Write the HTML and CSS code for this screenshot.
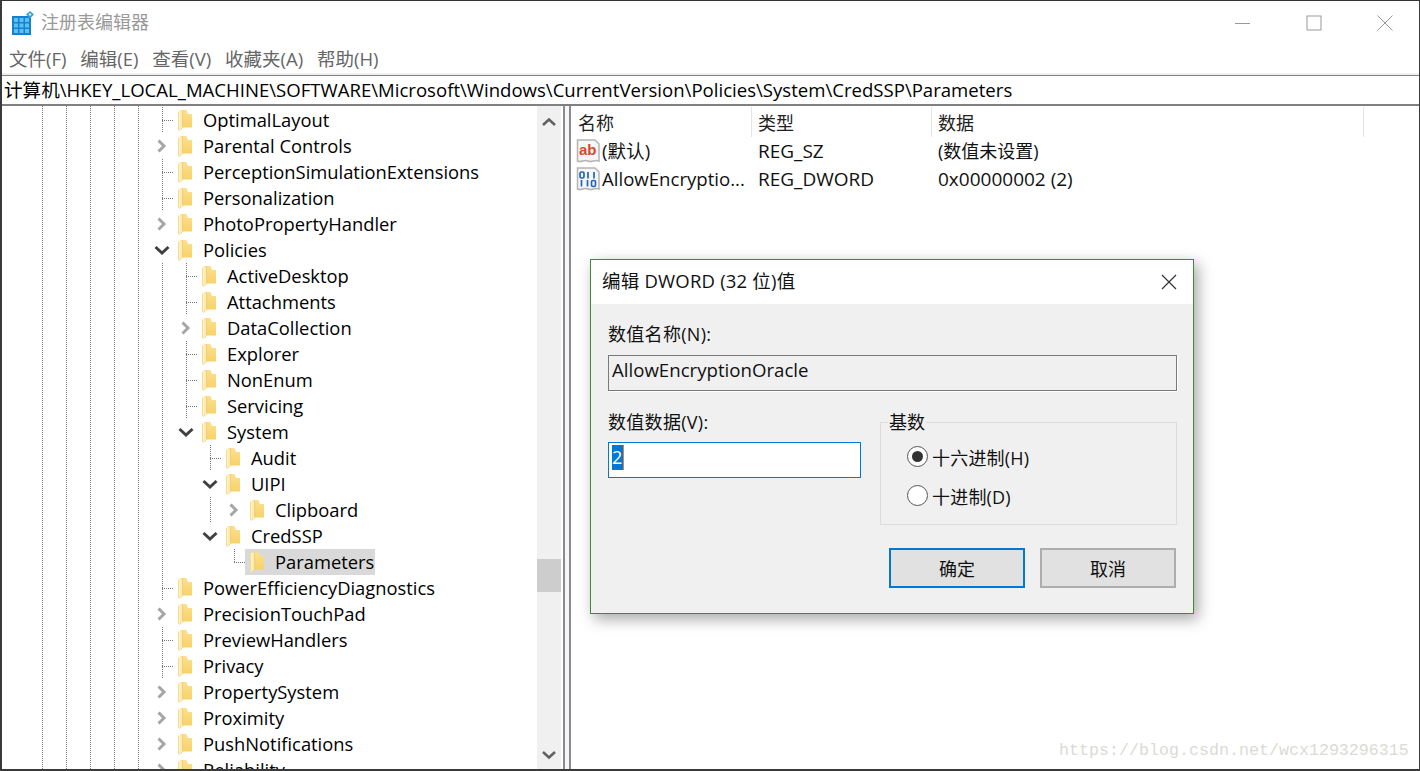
FILE: index.html
```html
<!DOCTYPE html>
<html lang="zh-CN">
<head>
<meta charset="utf-8">
<title>注册表编辑器</title>
<link rel="stylesheet" href="styles.css">
</head>
<body>
<svg class="sprite" aria-hidden="true">
  <defs>
    <linearGradient id="door" x1="0" x2="1" y1="0" y2="0"><stop offset="0" stop-color="#fff4cb"/><stop offset="1" stop-color="#fde7a2"/></linearGradient>
    <linearGradient id="back" x1="0" x2="0" y1="0" y2="1"><stop offset="0" stop-color="#fbe08f"/><stop offset="1" stop-color="#f8d269"/></linearGradient>
  </defs>
  <symbol id="folder" viewBox="0 0 14 21">
    <path d="M2 0H8.500L10 4H14V17.500H2Z" fill="url(#back)"/>
    <path d="M0 1.600L4.600 0.200V17.600L1.400 20.600L0 20.200Z" fill="url(#door)"/>
    <path d="M0.300 1.800V20M4.600 0.200V17.600L1.400 20.600" fill="none" stroke="#e8c874" stroke-width=".7"/>
  </symbol>
  <symbol id="right" viewBox="0 0 24 26">
    <path d="M8.500 7.500L14 13L8.500 18.500" fill="none" stroke="#a6a6a6" stroke-width="3"/>
  </symbol>
  <symbol id="down" viewBox="0 0 24 26">
    <path d="M5.500 10L12 16L18.500 10" fill="none" stroke="#404040" stroke-width="3"/>
  </symbol>
</svg>
<div class="window">
  <header class="titlebar">
    <svg class="appicon" viewBox="0 0 22 24" width="22" height="24">
      <rect x="0" y="5" width="19" height="19" fill="#1582cf"/>
      <path d="M2 7h4v4H2zM7.500 7h4v4h-4zM13 7h4v4h-4zM2 12.500h4v4H2zM7.500 12.500h4v4h-4zM13 12.500h4v4h-4zM2 18h4v4H2zM7.500 18h4v4h-4zM13 18h4v4h-4z" fill="#5cc0f0"/>
      <path d="M18 0l4 3.500-4 4-4-4z" fill="#3aa0dc"/>
      <path d="M18 2l1.500 1.500L18 5l-1.500-1.500z" fill="#d8f0fb"/>
    </svg>
    <span class="apptitle">注册表编辑器</span>
    <div class="winbtns">
      <svg viewBox="0 0 16 16" width="16" height="16"><path d="M0 8.500H15" stroke="#999" fill="none"/></svg>
      <svg viewBox="0 0 16 16" width="16" height="16"><rect x="1" y="1" width="14" height="14" stroke="#999" fill="none"/></svg>
      <svg viewBox="0 0 16 16" width="16" height="16"><path d="M0.500 0.500L15.500 15.500M15.500 0.500L0.500 15.500" stroke="#999" fill="none"/></svg>
    </div>
  </header>
  <nav class="menubar">
    <span class="menu">文件(F)</span>
    <span class="menu">编辑(E)</span>
    <span class="menu">查看(V)</span>
    <span class="menu">收藏夹(A)</span>
    <span class="menu">帮助(H)</span>
  </nav>
  <div class="address">计算机\HKEY_LOCAL_MACHINE\SOFTWARE\Microsoft\Windows\CurrentVersion\Policies\System\CredSSP\Parameters</div>
  <main class="panes">
    <section class="treepane">
      <div class="tree">
        <div class="row"><span class="tw leaf"></span><span class="item"><svg class="fld"><use href="#folder"/></svg><span class="lbl">OptimalLayout</span></span></div>
        <div class="row"><span class="tw"><svg class="chev"><use href="#right"/></svg></span><span class="item"><svg class="fld"><use href="#folder"/></svg><span class="lbl">Parental Controls</span></span></div>
        <div class="row"><span class="tw leaf"></span><span class="item"><svg class="fld"><use href="#folder"/></svg><span class="lbl">PerceptionSimulationExtensions</span></span></div>
        <div class="row"><span class="tw leaf"></span><span class="item"><svg class="fld"><use href="#folder"/></svg><span class="lbl">Personalization</span></span></div>
        <div class="row"><span class="tw"><svg class="chev"><use href="#right"/></svg></span><span class="item"><svg class="fld"><use href="#folder"/></svg><span class="lbl">PhotoPropertyHandler</span></span></div>
        <div class="row"><span class="tw"><svg class="chev"><use href="#down"/></svg></span><span class="item"><svg class="fld"><use href="#folder"/></svg><span class="lbl">Policies</span></span></div>
        <div class="row"><span class="ind v"></span><span class="tw leaf"></span><span class="item"><svg class="fld"><use href="#folder"/></svg><span class="lbl">ActiveDesktop</span></span></div>
        <div class="row"><span class="ind v"></span><span class="tw leaf"></span><span class="item"><svg class="fld"><use href="#folder"/></svg><span class="lbl">Attachments</span></span></div>
        <div class="row"><span class="ind v"></span><span class="tw"><svg class="chev"><use href="#right"/></svg></span><span class="item"><svg class="fld"><use href="#folder"/></svg><span class="lbl">DataCollection</span></span></div>
        <div class="row"><span class="ind v"></span><span class="tw leaf"></span><span class="item"><svg class="fld"><use href="#folder"/></svg><span class="lbl">Explorer</span></span></div>
        <div class="row"><span class="ind v"></span><span class="tw leaf"></span><span class="item"><svg class="fld"><use href="#folder"/></svg><span class="lbl">NonEnum</span></span></div>
        <div class="row"><span class="ind v"></span><span class="tw leaf"></span><span class="item"><svg class="fld"><use href="#folder"/></svg><span class="lbl">Servicing</span></span></div>
        <div class="row"><span class="ind v"></span><span class="tw"><svg class="chev"><use href="#down"/></svg></span><span class="item"><svg class="fld"><use href="#folder"/></svg><span class="lbl">System</span></span></div>
        <div class="row"><span class="ind v"></span><span class="ind"></span><span class="tw leaf"></span><span class="item"><svg class="fld"><use href="#folder"/></svg><span class="lbl">Audit</span></span></div>
        <div class="row"><span class="ind v"></span><span class="ind"></span><span class="tw"><svg class="chev"><use href="#down"/></svg></span><span class="item"><svg class="fld"><use href="#folder"/></svg><span class="lbl">UIPI</span></span></div>
        <div class="row"><span class="ind v"></span><span class="ind"></span><span class="ind v"></span><span class="tw"><svg class="chev"><use href="#right"/></svg></span><span class="item"><svg class="fld"><use href="#folder"/></svg><span class="lbl">Clipboard</span></span></div>
        <div class="row"><span class="ind v"></span><span class="ind"></span><span class="tw"><svg class="chev"><use href="#down"/></svg></span><span class="item"><svg class="fld"><use href="#folder"/></svg><span class="lbl">CredSSP</span></span></div>
        <div class="row"><span class="ind v"></span><span class="ind"></span><span class="ind"></span><span class="tw last"></span><span class="item selected"><svg class="fld"><use href="#folder"/></svg><span class="lbl">Parameters</span></span></div>
        <div class="row"><span class="tw leaf"></span><span class="item"><svg class="fld"><use href="#folder"/></svg><span class="lbl">PowerEfficiencyDiagnostics</span></span></div>
        <div class="row"><span class="tw"><svg class="chev"><use href="#right"/></svg></span><span class="item"><svg class="fld"><use href="#folder"/></svg><span class="lbl">PrecisionTouchPad</span></span></div>
        <div class="row"><span class="tw leaf"></span><span class="item"><svg class="fld"><use href="#folder"/></svg><span class="lbl">PreviewHandlers</span></span></div>
        <div class="row"><span class="tw leaf"></span><span class="item"><svg class="fld"><use href="#folder"/></svg><span class="lbl">Privacy</span></span></div>
        <div class="row"><span class="tw"><svg class="chev"><use href="#right"/></svg></span><span class="item"><svg class="fld"><use href="#folder"/></svg><span class="lbl">PropertySystem</span></span></div>
        <div class="row"><span class="tw"><svg class="chev"><use href="#right"/></svg></span><span class="item"><svg class="fld"><use href="#folder"/></svg><span class="lbl">Proximity</span></span></div>
        <div class="row"><span class="tw"><svg class="chev"><use href="#right"/></svg></span><span class="item"><svg class="fld"><use href="#folder"/></svg><span class="lbl">PushNotifications</span></span></div>
        <div class="row"><span class="tw"><svg class="chev"><use href="#right"/></svg></span><span class="item"><svg class="fld"><use href="#folder"/></svg><span class="lbl">Reliability</span></span></div>
      </div>
      <div class="scrollbar">
        <svg class="sarrow" viewBox="0 0 14 10" width="14" height="10"><path d="M1 8L7 2.500L13 8" fill="none" stroke="#606060" stroke-width="2.500"/></svg>
        <div class="thumb"></div>
        <svg class="sarrow" viewBox="0 0 14 10" width="14" height="10"><path d="M1 2L7 7.500L13 2" fill="none" stroke="#606060" stroke-width="2.500"/></svg>
      </div>
    </section>
    <div class="splitter"></div>
    <section class="listpane">
      <div class="lhead">
        <span class="hcell h1">名称</span>
        <span class="hcell h2">类型</span>
        <span class="hcell h3">数据</span>
      </div>
      <div class="lrow">
        <span class="cell c1">
          <svg class="vicon" viewBox="0 0 24 24" width="24" height="24">
            <path d="M1.500 1H19L23 5V22C19 20 16 24 12 22C8 20 5 24 1.500 22Z" fill="#f6f6f6" stroke="#b4b4b4" stroke-width="1.500"/>
            <text x="3" y="15.500" class="ab">ab</text>
          </svg>
          <span class="vname">(默认)</span>
        </span>
        <span class="cell c2 wide">REG_SZ</span>
        <span class="cell c3">(数值未设置)</span>
      </div>
      <div class="lrow">
        <span class="cell c1">
          <svg class="vicon" viewBox="0 0 24 24" width="24" height="24">
            <path d="M1.500 1H19L23 5V22C19 20 16 24 12 22C8 20 5 24 1.500 22Z" fill="#f6f6f6" stroke="#b4b4b4" stroke-width="1.500"/>
            <g fill="none" stroke="#2464c0" stroke-width="1.700">
              <rect x="4" y="5" width="4" height="6" rx="1.500"/>
              <path d="M12 5V11.500M18 5V11.500"/>
              <path d="M5.500 13V19.500M11.500 13V19.500"/>
              <rect x="15.500" y="13.500" width="4" height="6" rx="1.500"/>
            </g>
          </svg>
          <span class="vname">AllowEncryptio...</span>
        </span>
        <span class="cell c2 wide">REG_DWORD</span>
        <span class="cell c3 wide">0x00000002 (2)</span>
      </div>
    </section>
  </main>
  <div class="watermark">https://blog.csdn.net/wcx1293296315</div>
  <div class="dialog">
    <div class="dtitle">
      <span class="dcap">编辑 DWORD (32 位)值</span>
      <svg viewBox="0 0 16 16" width="16" height="16"><path d="M1 1L15 15M15 1L1 15" stroke="#333" stroke-width="1.200" fill="none"/></svg>
    </div>
    <div class="dbody">
      <div class="flabel">数值名称(N):</div>
      <div class="namebox">AllowEncryptionOracle</div>
      <div class="dmid">
        <div class="dataside">
          <div class="flabel">数值数据(V):</div>
          <div class="databox"><span class="sel">2</span></div>
        </div>
        <fieldset class="base">
          <legend>基数</legend>
          <div class="radio first"><span class="rmark on"></span>十六进制(H)</div>
          <div class="radio"><span class="rmark"></span>十进制(D)</div>
        </fieldset>
      </div>
      <div class="dbtns">
        <button class="btn primary">确定</button>
        <button class="btn">取消</button>
      </div>
    </div>
  </div>
</div>
</body>
</html>
```
FILE: styles.css
```css
* { box-sizing: border-box; }
html, body { margin: 0; padding: 0; height: 100%; overflow: hidden; }
body {
  background: #fff;
  font-family: "Open Sans", "Noto Sans CJK SC", sans-serif;
  font-size: 18px;
  color: #000;
}
.sprite { position: absolute; width: 0; height: 0; }
.window {
  position: relative;
  width: 1420px;
  height: 771px;
  border-top: 1px solid #333;
  border-left: 2px solid #3a3a3a;
  border-right: 1px solid #3a3a3a;
  border-bottom: 2px solid #3a3a3a;
  display: flex;
  flex-direction: column;
  overflow: hidden;
  background: #fff;
}

/* title + menu */
.titlebar { height: 42px; display: flex; align-items: center; padding-left: 10px; flex: none; }
.appicon { margin-top: 1px; }
.apptitle { margin-left: 7px; color: #999; line-height: 24px; }
.winbtns { margin-left: auto; display: flex; gap: 55px; padding-right: 26px; margin-top: 2px; }
.menubar { height: 32px; display: flex; align-items: center; padding-left: 7px; gap: 13.800px; color: #666; flex: none; font-size: 18.500px; }
.menu { line-height: 24px; }

/* address */
.address {
  flex: none;
  height: 31px;
  border-top: 1px solid #808080;
  border-bottom: 2px solid #808080;
  box-shadow: 0 -2px 0 #f0f0f0;
  padding-left: 2px;
  line-height: 28px;
  white-space: nowrap;
  font-size: 18.580px;
}

/* panes */
.panes { flex: 1; display: flex; min-height: 0; }
.treepane { width: 559px; display: flex; flex: none; }
.tree {
  width: 535px;
  flex: none;
  padding-top: 1px;
  overflow: hidden;
  font-size: 18.350px;
  background-image:
    repeating-linear-gradient(#777 0 1px, transparent 1px 2px),
    repeating-linear-gradient(#777 0 1px, transparent 1px 2px),
    repeating-linear-gradient(#777 0 1px, transparent 1px 2px),
    repeating-linear-gradient(#777 0 1px, transparent 1px 2px),
    repeating-linear-gradient(#777 0 1px, transparent 1px 2px);
  background-size: 1px 100%;
  background-repeat: no-repeat;
  background-position: 40px 0, 64px 0, 88px 0, 112px 0, 136px 0;
}
.row { height: 26px; display: flex; padding-left: 148px; }
.ind, .tw { width: 24px; height: 26px; flex: none; background-repeat: no-repeat; }
.ind.v {
  background-image: repeating-linear-gradient(#777 0 1px, transparent 1px 2px);
  background-size: 1px 100%;
  background-position: 12px 0;
}
.tw.leaf {
  background-image:
    repeating-linear-gradient(#777 0 1px, transparent 1px 2px),
    repeating-linear-gradient(90deg, #777 0 1px, transparent 1px 2px);
  background-size: 1px 100%, 11px 1px;
  background-position: 12px 0, 12px 13px;
}
.tw.last {
  background-image:
    repeating-linear-gradient(#777 0 1px, transparent 1px 2px),
    repeating-linear-gradient(90deg, #777 0 1px, transparent 1px 2px);
  background-size: 1px 14px, 11px 1px;
  background-position: 12px 0, 12px 13px;
}
.chev { width: 24px; height: 26px; display: block; }
.item { display: flex; align-items: flex-start; padding: 0 3px 0 4px; height: 26px; white-space: nowrap; }
.item.selected { background: #d9d9d9; margin-left: -1px; padding-left: 5px; padding-right: 1px; }
.fld { width: 14px; height: 21px; margin-top: 3px; flex: none; }
.lbl { margin-left: 11px; line-height: 26px; }

.scrollbar { width: 24px; flex: none; background: #f0f0f0; display: flex; flex-direction: column; align-items: center; padding-top: 11px; }
.sarrow { flex: none; }
.thumb { width: 24px; height: 33px; background: #cdcdcd; margin-top: 432px; margin-bottom: 158px; flex: none; }

.splitter { width: 8px; flex: none; background: #f6f6f6; border-left: 2px solid #8a8a90; border-right: 2px solid #8a8a90; margin-left: 2px; }

.listpane { flex: 1; min-width: 0; padding-top: 1px; }
.lhead { height: 30px; display: flex; }
.hcell { line-height: 32px; padding-left: 6px; border-right: 1px solid #e5e5e5; color: #222; flex: none; }
.h1 { width: 181px; padding-left: 7px; }
.h2 { width: 180px; }
.h3 { width: 432px; }
.c1, .c2 { width: 180px; flex: none; }
.c3 { width: 432px; flex: none; }
.lrow { height: 28px; display: flex; }
.cell { line-height: 28px; padding-left: 7px; white-space: nowrap; color: #111; }
.wide { font-size: 19px; }
.cell.c1 { display: flex; align-items: center; padding-left: 5px; }
.vicon { flex: none; }
.vname { margin-left: 2px; white-space: nowrap; font-size: 18.600px; }
.ab { font: 700 15px "Liberation Sans", sans-serif; fill: #d64a2a; }

.watermark {
  position: absolute;
  left: 1057px;
  top: 740px;
  font-family: "Liberation Mono", monospace;
  font-size: 16.670px;
  line-height: 20px;
  color: #dbdbd5;
}

/* dialog */
.dialog {
  position: absolute;
  left: 588px;
  top: 258px;
  width: 604px;
  height: 355px;
  background: #f0f0f0;
  border: 1px solid #3c8a3c;
  box-shadow: 4px 5px 14px rgba(0,0,0,.35);
  display: flex;
  flex-direction: column;
}
.dtitle { height: 44px; flex: none; background: #fff; display: flex; align-items: center; justify-content: space-between; padding: 0 16px 0 11px; color: #111; }
.dcap { margin-bottom: 4px; font-size: 18.500px; letter-spacing: .2px; }
.dbody { flex: 1; padding: 17px 16px 0 17px; }
.flabel { line-height: 26px; height: 26px; color: #111; letter-spacing: .3px; }
.namebox { margin-top: 8px; height: 36px; border: 1px solid #7a7a7a; box-shadow: 1px 1px 0 #fff; padding-left: 3px; line-height: 28px; width: 569px; color: #111; font-size: 18.650px; }
.dmid { display: flex; margin-top: 18px; }
.dataside { width: 272px; flex: none; }
.databox { margin-top: 7px; width: 253px; height: 36px; border: 1px solid #0078d7; background: #fff; padding: 2px 0 0 3px; display: flex; align-items: flex-start; }
.sel { background: #0078d7; color: #fff; width: 12px; height: 25px; line-height: 25px; display: block; border-right: 1px solid #e8822a; }
.base {
  margin: 2px 0 0 0;
  padding: 0 0 0 26px;
  width: 297px;
  height: 114px;
  border: 1px solid #dcdcdc;
  min-width: 0;
}
.base legend { padding: 0 1px; margin-left: -19px; line-height: 22px; height: 22px; color: #111; }
.radio { display: flex; align-items: center; height: 39px; color: #111; letter-spacing: .2px; }
.radio.first { margin-top: 4px; }
.rmark { width: 21px; height: 21px; border-radius: 50%; border: 1px solid #555; background: #fff; margin-right: 4px; flex: none; position: relative; }
.rmark.on::after { content: ""; position: absolute; left: 4px; top: 4px; width: 11px; height: 11px; border-radius: 50%; background: #333; }
.dbtns { display: flex; gap: 15px; margin-top: 23px; padding-left: 281px; }
.btn { width: 136px; height: 40px; border: 2px solid #adadad; background: #e1e1e1; font: inherit; color: #111; padding: 0; }
.btn.primary { border-color: #0078d7; }
```
